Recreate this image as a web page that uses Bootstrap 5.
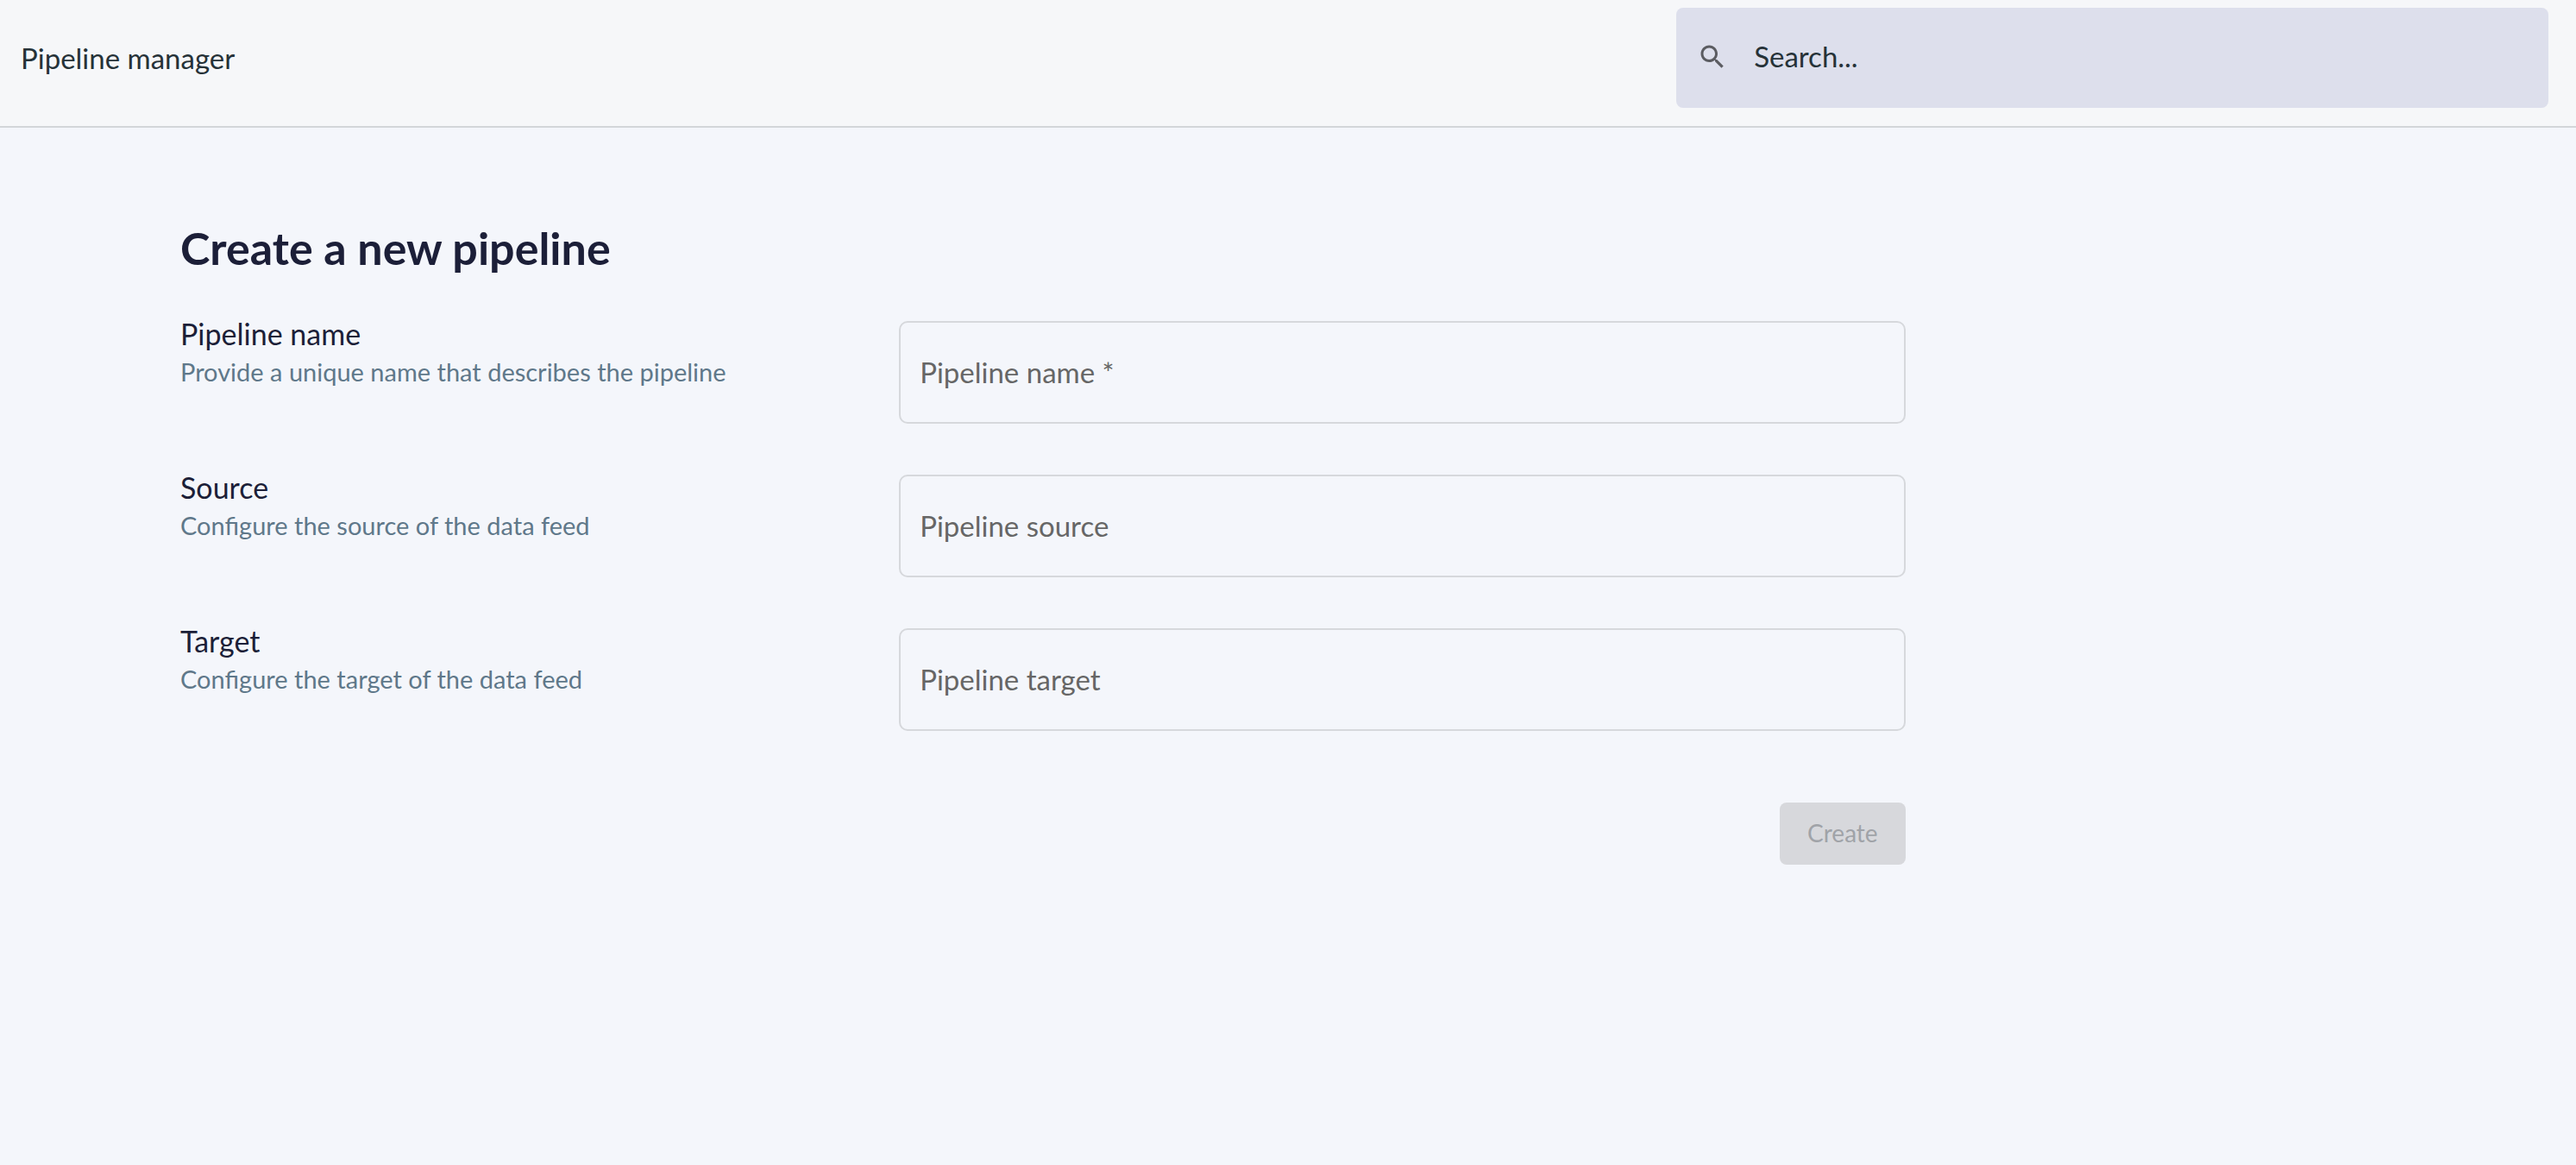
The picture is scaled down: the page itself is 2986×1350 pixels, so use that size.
<!DOCTYPE html>
<html lang="en">
<head>
<meta charset="utf-8">
<meta name="viewport" content="width=device-width, initial-scale=1">
<title>Pipeline manager</title>
<link href="https://cdn.jsdelivr.net/npm/bootstrap@5.3.0/dist/css/bootstrap.min.css" rel="stylesheet">
<style>
body { background: #f4f6fb; color: #1c1f38; font-family: Lato, "Noto Sans", sans-serif; font-size: 33px; line-height: 44px; }
.topbar { background: #f6f7f9; border-bottom: 2px solid #d3d6d9; padding: 9px 32px 21px 24px; color: #263238; }
.search-box { width: 34.5%; height: 116px; background: #dddfec; border-radius: 8px; padding: 0 24px 2px; gap: 30px; }
.search-box svg { width: 36px; height: 36px; fill: #5b5c61; }
.search-box input { font-size: 33px; color: #263238; }
.search-box input::placeholder { color: #263238; opacity: 1; }
.content { margin-left: 7%; width: 67%; padding-top: 107px; padding-right: 1px; }
.page-title { font-size: 52px; line-height: 64px; font-weight: 700; margin-bottom: 53px; }
.form-rows { display: grid; gap: 59px; }
.field-name { font-size: 34px; line-height: 44px; margin-top: -7px; }
.hint { font-size: 29px; line-height: 44px; color: #5f788a; }
.field-input { height: 119px; background: transparent; border: 2px solid #d6d8dc; border-radius: 10px; padding: 0 22px 2px; font-size: 33px; color: #1c1f38; }
.field-input:focus { background: transparent; }
.field-input::placeholder { color: #666; opacity: 1; }
.create-btn { margin-top: 83px; height: 72px; padding: 0 32px 2px; font-size: 28px; border-radius: 8px; }
.create-btn:disabled { background: #d7d8dc; color: #a0a3a8; opacity: 1; border: 0; }
</style>
</head>
<body>
<header class="topbar d-flex align-items-center justify-content-between">
  <div>Pipeline manager</div>
  <label class="search-box d-flex align-items-center" for="search">
    <svg class="flex-shrink-0" viewBox="0 0 24 24" aria-hidden="true"><path d="M15.500 14h-.79l-.28-.27C15.410 12.590 16 11.110 16 9.500 16 5.910 13.090 3 9.500 3S3 5.910 3 9.500 5.910 16 9.500 16c1.610 0 3.090-.59 4.230-1.570l.27.28v.79l5 4.990L20.490 19l-4.990-5zm-6 0C7.010 14 5 11.990 5 9.500S7.010 5 9.500 5 14 7.010 14 9.500 11.990 14 9.500 14z"/></svg>
    <input id="search" class="form-control border-0 bg-transparent shadow-none p-0" type="text" placeholder="Search..." aria-label="Search">
  </label>
</header>
<main class="content">
  <h1 class="page-title">Create a new pipeline</h1>
  <form>
    <div class="form-rows">
      <div class="row g-0">
        <div class="col-5"><label class="field-name d-block" for="pname">Pipeline name</label><div class="hint">Provide a unique name that describes the pipeline</div></div>
        <div class="col-7"><input id="pname" class="form-control field-input" type="text" placeholder="Pipeline name *" required></div>
      </div>
      <div class="row g-0">
        <div class="col-5"><label class="field-name d-block" for="psource">Source</label><div class="hint">Configure the source of the data feed</div></div>
        <div class="col-7"><input id="psource" class="form-control field-input" type="text" placeholder="Pipeline source"></div>
      </div>
      <div class="row g-0">
        <div class="col-5"><label class="field-name d-block" for="ptarget">Target</label><div class="hint">Configure the target of the data feed</div></div>
        <div class="col-7"><input id="ptarget" class="form-control field-input" type="text" placeholder="Pipeline target"></div>
      </div>
    </div>
    <div class="d-flex justify-content-end"><button class="btn create-btn" type="submit" disabled>Create</button></div>
  </form>
</main>
<script src="https://cdn.jsdelivr.net/npm/bootstrap@5.3.0/dist/js/bootstrap.bundle.min.js"></script>
</body>
</html>
